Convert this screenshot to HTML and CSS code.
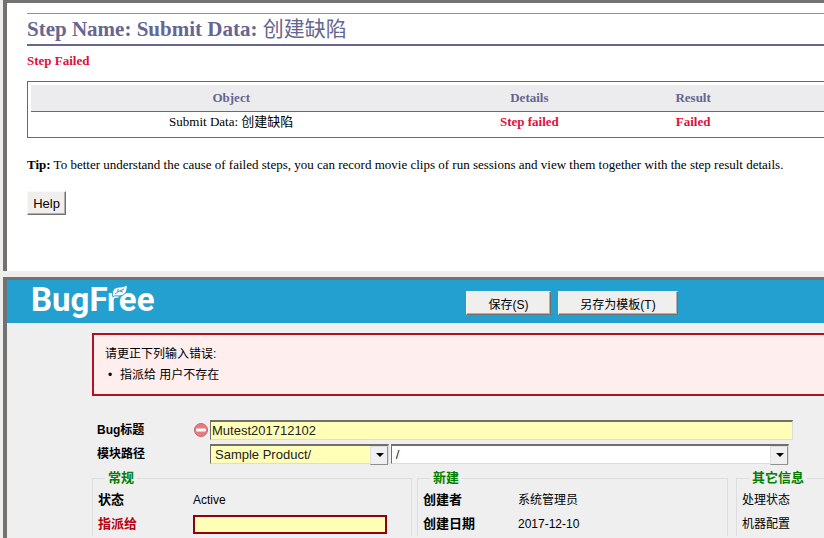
FILE: index.html
```html
<!DOCTYPE html>
<html lang="zh-CN">
<head>
<meta charset="UTF-8">
<meta name="viewport" content="width=device-width, initial-scale=1.0">
<title>Step Name: Submit Data</title>
<link rel="stylesheet" href="styles.css">
</head>
<body>
<section class="pane report">
  <h1 class="step-name">Step Name: Submit Data: <span class="cjk">创建缺陷</span></h1>
  <p class="step-status failed">Step Failed</p>
  <div class="result-box">
    <table class="results">
      <colgroup>
        <col class="col-object">
        <col class="col-details">
        <col class="col-result">
        <col>
      </colgroup>
      <thead>
        <tr><th>Object</th><th>Details</th><th>Result</th><td></td></tr>
      </thead>
      <tbody>
        <tr>
          <td>Submit Data: 创建缺陷</td>
          <td class="failed">Step failed</td>
          <td class="failed">Failed</td>
          <td></td>
        </tr>
      </tbody>
    </table>
  </div>
  <p class="tip"><b>Tip:</b> To better understand the cause of failed steps, you can record movie clips of run sessions and view them together with the step result details.</p>
  <button type="button" class="btn btn-help">Help</button>
</section>

<section class="pane bug">
  <header class="toolbar">
    <div class="logo">BugFree
      <svg class="leaf" viewBox="0 0 16 12" width="16" height="12" aria-hidden="true">
        <path d="M1 12C-1 6 2 2 8 2C11 2 13 1 15 0C16 6 13 11 7 11C4 11 3 10 1 12Z" fill="#fff" stroke="#239fd0" stroke-width="1"/>
        <path d="M3 9C5 7 8 6 12 4M6 7L6 4M8 6L11 7" fill="none" stroke="#239fd0" stroke-width="1"/>
      </svg>
    </div>
    <div class="actions">
      <button type="button" class="btn btn-save">保存(S)</button>
      <button type="button" class="btn btn-template">另存为模板(T)</button>
    </div>
  </header>

  <form class="bug-form">
    <div class="errors">
      <p>请更正下列输入错误:</p>
      <ul>
        <li>指派给 用户不存在</li>
      </ul>
    </div>

    <div class="main-fields">
      <div class="line">
        <label class="name" for="title">Bug标题</label>
        <svg class="stop" viewBox="0 0 14 14" width="14" height="14" aria-hidden="true">
          <circle cx="7" cy="7" r="6.5" fill="#e77c80" stroke="#cf6468"/>
          <rect x="2" y="5.5" width="10" height="3" rx="1" fill="#fff"/>
        </svg>
        <input class="text title" id="title" type="text" value="Mutest201712102">
      </div>
      <div class="line">
        <label class="name" for="product">模块路径</label>
        <div class="paths">
          <span class="select product">
            <select id="product"><option>Sample Product/</option></select>
          </span>
          <span class="select module">
            <select id="module" aria-label="模块"><option>/</option></select>
          </span>
        </div>
      </div>
    </div>

    <div class="groups">
      <fieldset>
        <legend>常规</legend>
        <div class="field"><span class="name">状态</span><span>Active</span></div>
        <div class="field">
          <label class="name invalid" for="assign">指派给</label>
          <input class="assign" id="assign" type="text">
        </div>
      </fieldset>
      <fieldset>
        <legend>新建</legend>
        <div class="field"><span class="name">创建者</span><span>系统管理员</span></div>
        <div class="field"><span class="name">创建日期</span><span>2017-12-10</span></div>
      </fieldset>
      <fieldset class="other">
        <legend>其它信息</legend>
        <div class="field">处理状态</div>
        <div class="field">机器配置</div>
      </fieldset>
    </div>
  </form>
</section>
</body>
</html>
```

FILE: styles.css
```css
* {
  box-sizing: border-box;
}

body {
  margin: 0;
  padding-left: 3px;
  height: 100vh;
  overflow: hidden;
  background: #f0eeec;
  display: flex;
  flex-direction: column;
  gap: 6px;
}

h1, p, ul {
  margin: 0;
}

.pane {
  border-left: 4px solid #727272;
  border-top: 3px solid #727272;
}

/* run report */
.report {
  padding: 10px 0 56px 20px;
  background: #fff;
  font: 13px/16px "Liberation Serif", "Noto Sans CJK SC", serif;
}

.step-name {
  border-top: 1px solid #8c8ca6;
  border-bottom: 2px solid #666690;
  font-size: 21px;
  line-height: 30px;
  color: #666690;
}

.cjk {
  font-weight: normal;
}

.step-status {
  margin: 7px 0 12px;
}

.failed {
  color: #e0103a;
  font-weight: bold;
}

.result-box {
  border: 1px solid #666680;
  border-right: none;
  padding: 3px 0 3px 3px;
}

.results {
  width: 100%;
  table-layout: fixed;
  border-collapse: collapse;
  text-align: center;
}

.col-object {
  width: 50.5%;
}

.col-details {
  width: 24.7%;
}

.col-result {
  width: 16.6%;
}

.results td {
  padding: 2px 0 4px;
}

.results thead tr {
  background: #ececee;
  border-bottom: 1px solid #666690;
}

.results th {
  padding: 5px 0;
  color: #666690;
}

.tip {
  margin: 19px 0 18px;
  white-space: nowrap;
}

.btn {
  padding: 0;
  height: 24px;
  border: 1px solid;
  border-color: #f8f8f8 #707070 #707070 #f8f8f8;
  box-shadow: inset -1px -1px #b0b0b0;
  background: #f0efed;
  color: #000;
  font: 12px "Liberation Sans", "Noto Sans CJK SC", sans-serif;
}

.btn-help {
  display: block;
  width: 39px;
  font-size: 13px;
}

/* bug editor */
.bug {
  flex: 1;
  min-height: 0;
  background: #efefef;
  font: 12px/16px "Liberation Sans", "Noto Sans CJK SC", sans-serif;
}

.toolbar {
  display: flex;
  align-items: center;
  height: 43px;
  padding-left: 24px;
  background: #239fd0;
}

.logo {
  position: relative;
  width: 435px;
  padding-bottom: 3px;
  color: #fff;
  font: 700 33px/38px Roboto, sans-serif;
}

.leaf {
  position: absolute;
  left: 81px;
  top: 4px;
}

.actions {
  display: flex;
  gap: 7px;
  padding-top: 3px;
}

.btn-save {
  width: 85px;
}

.btn-template {
  width: 120px;
}

.bug-form {
  padding: 10px 0 0 85px;
}

.errors {
  border: 2px solid #b01020;
  border-right: none;
  padding: 9px 12px 8px 11px;
  background: #ffeeee;
  line-height: 21px;
}

.errors ul {
  padding-left: 15px;
  list-style: none;
}

.errors li::before {
  content: "•";
  display: inline-block;
  width: 12px;
  margin-left: -12px;
}

.main-fields {
  display: flex;
  flex-direction: column;
  gap: 4px;
  padding: 24px 31px 0 5px;
}

.line {
  display: flex;
  align-items: center;
  height: 20px;
}

.name {
  width: 95px;
  flex: none;
  font-weight: bold;
}

.line .name {
  width: 97px;
}

.stop {
  margin-right: 2px;
}

.text,
.select {
  height: 20px;
  border: 1px solid;
  border-top: 2px solid #707068;
  border-color: #707068 #dcdcdc #dcdcdc #707068;
  background: #ffffb8;
}

.text {
  flex: 1;
  min-width: 0;
  padding: 0 1px;
  color: #222;
  font: 13px "Liberation Sans", sans-serif;
}

.paths {
  flex: 1;
  display: flex;
  gap: 2px;
  padding: 0 4px 0 16px;
}

.select {
  position: relative;
  flex: 178;
}

.module {
  flex: 399;
  background: #fff;
}

.select select {
  display: block;
  width: 100%;
  height: 17px;
  padding: 0 4px;
  border: none;
  appearance: none;
  background: transparent;
  color: #222;
  font: 13px "Liberation Sans", sans-serif;
}

/* drop-down button */
.select::before {
  content: "";
  position: absolute;
  top: 0;
  right: 0;
  width: 16px;
  height: 17px;
  border: 1px solid;
  border-color: #e0e0e0 #909090 #909090 #e0e0e0;
  background: #f0f0f0;
  pointer-events: none;
}

.select::after {
  content: "";
  position: absolute;
  top: 7px;
  right: 4px;
  border: 4px solid transparent;
  border-top-color: #000;
  border-bottom: none;
  pointer-events: none;
}

.groups {
  display: grid;
  grid-template-columns: 320fr 311fr 91fr;
  gap: 5px;
  padding-top: 6px;
}

fieldset {
  min-width: 0;
  margin: 0;
  padding: 2px 0 0 5px;
  border: 1px solid #dedede;
  border-bottom: none;
}

legend {
  margin-left: 7px;
  padding: 0 3px;
  color: #008000;
  font-size: 13px;
  font-weight: bold;
  white-space: nowrap;
}

.other {
  margin-left: 3px;
  border-right: none;
}

.field {
  display: flex;
  align-items: center;
  height: 24px;
  white-space: nowrap;
}

.field .name {
  font-size: 13px;
}

.invalid {
  color: #b80010;
}

.assign {
  width: 194px;
  height: 19px;
  border: 2px solid #900010;
  background: #ffffb8;
}
```
